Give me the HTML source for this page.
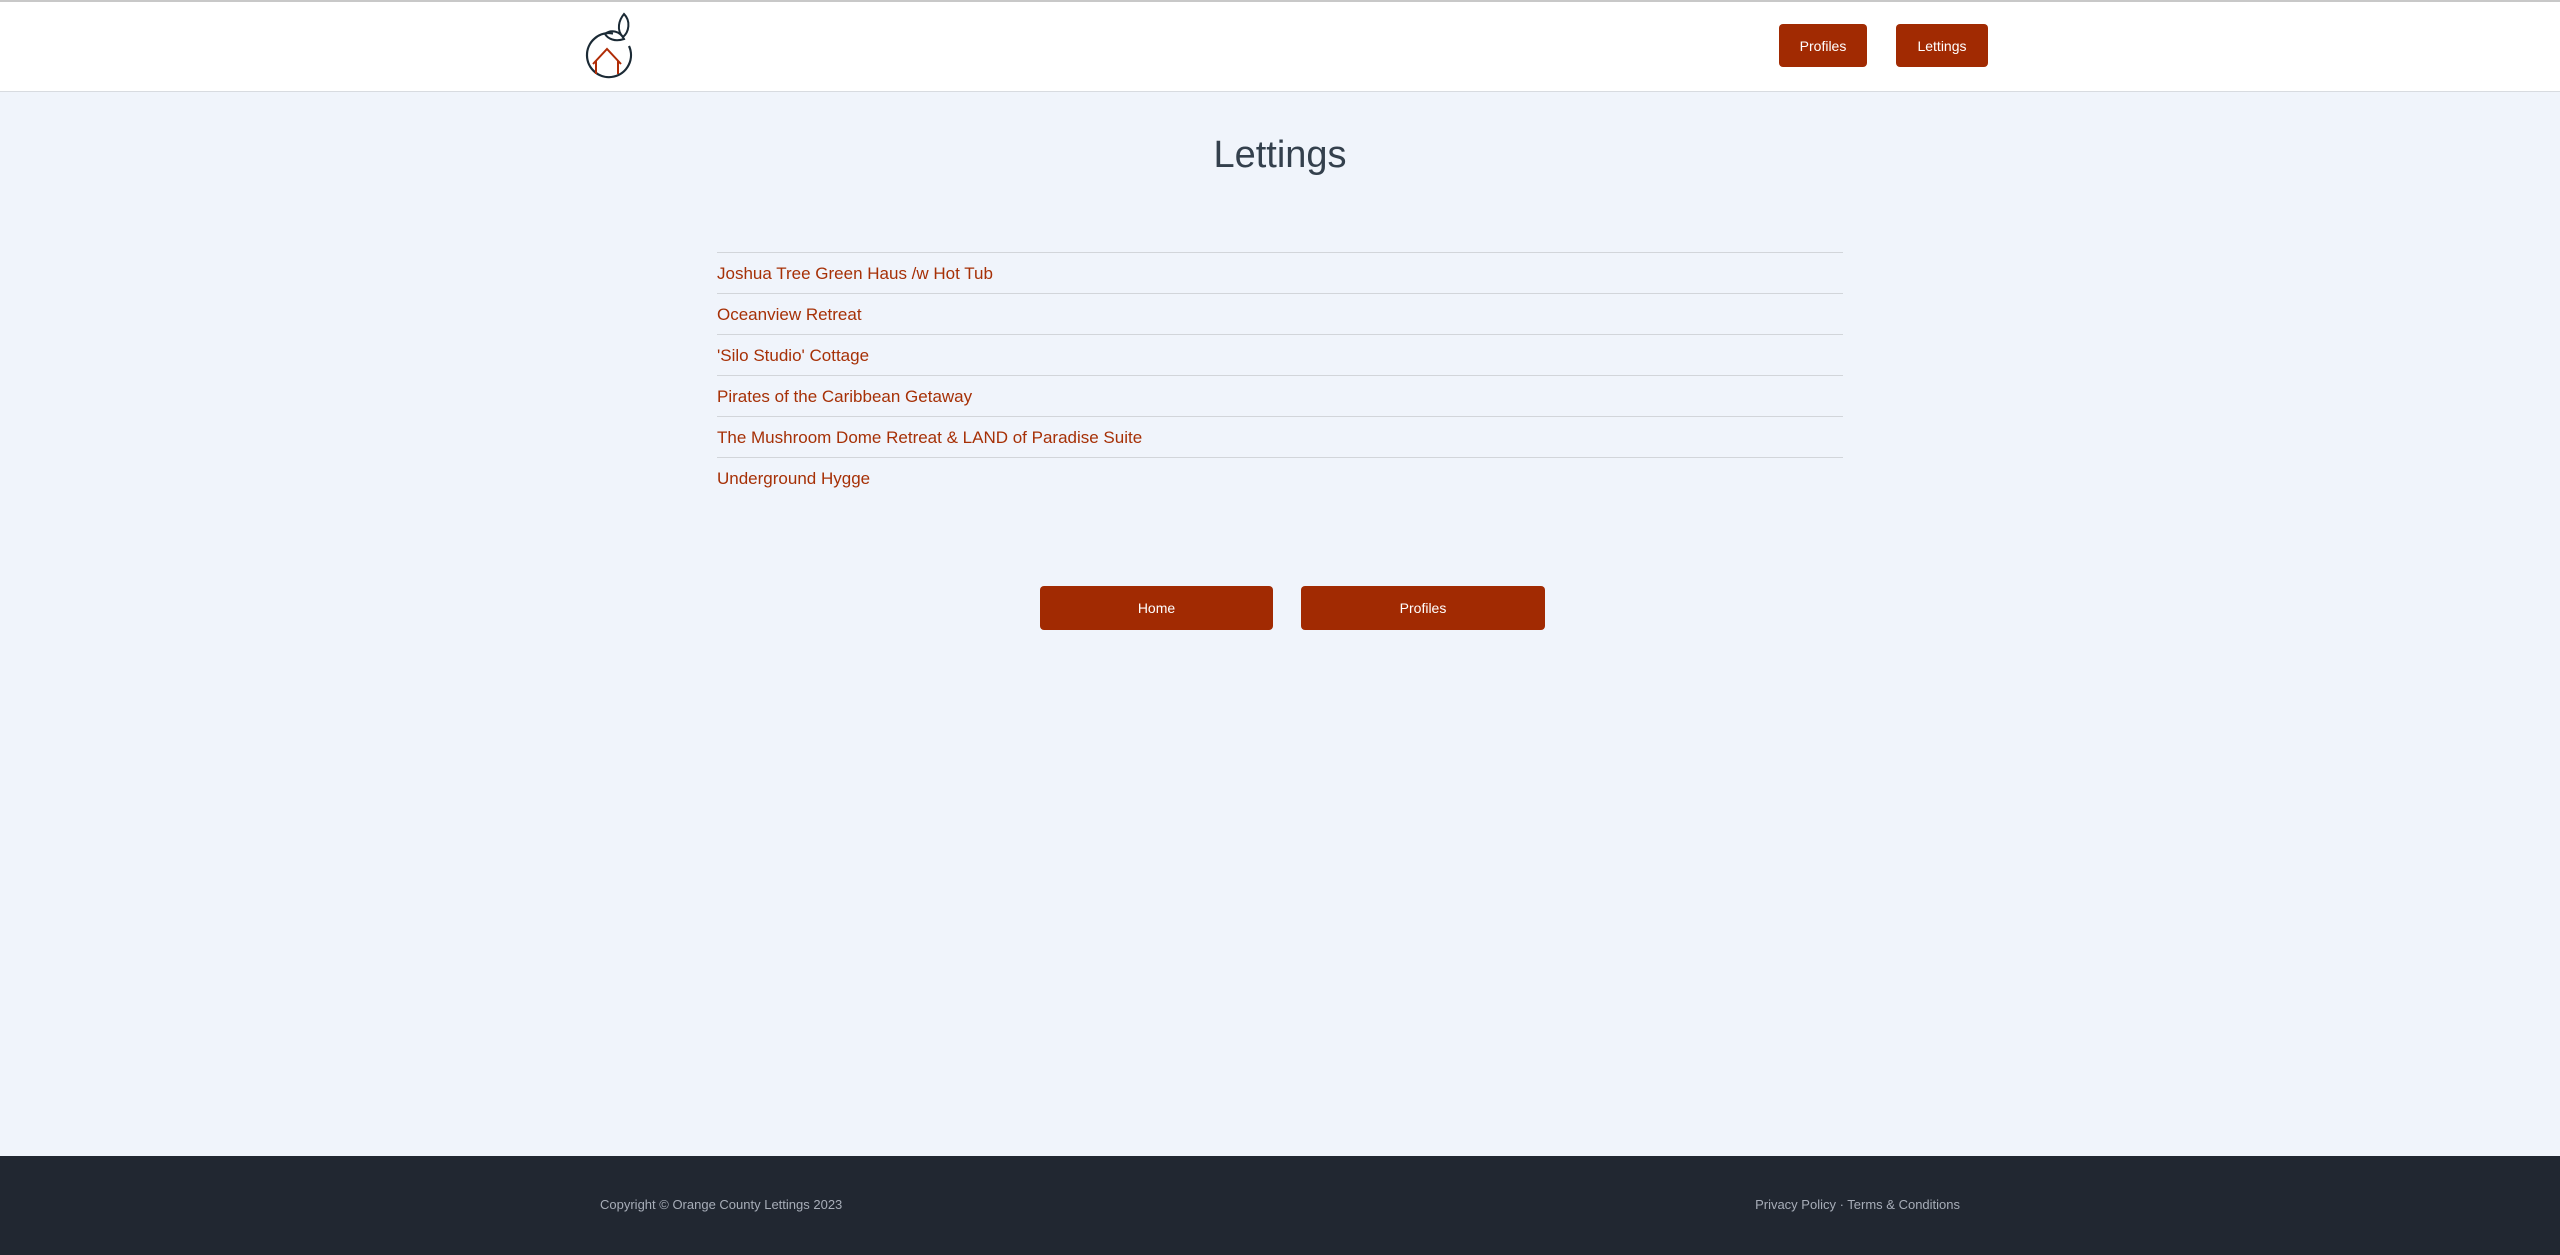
<!DOCTYPE html>
<html><head><meta charset="utf-8"><style>
*{margin:0;padding:0;box-sizing:border-box}
html,body{width:2560px;height:1255px;overflow:hidden;background:#f0f4fb;font-family:"Liberation Sans",sans-serif}
.hdr{position:absolute;left:0;top:0;width:2560px;height:92px;background:#fff;border-top:2px solid #c8c8c8;border-bottom:1px solid #d8dbe0}
.btn{position:absolute;background:#a12a02;color:#fff;border-radius:4px;display:flex;align-items:center;justify-content:center;font-size:14px}
h1{position:absolute;left:0;width:2560px;top:134px;text-align:center;font-weight:normal;font-size:38px;color:#34404d}
.list{position:absolute;left:717px;top:252px;width:1126px}
.list div{height:41px;border-top:1.5px solid #d2d5da;color:#a63006;font-size:17px;line-height:41px}
.ftr{position:absolute;left:0;top:1156px;width:2560px;height:99px;background:#212731;color:#a7adb8;font-size:13px}
</style></head><body>
<div class="hdr">
<svg style="position:absolute;left:580px;top:-2px" width="60" height="90" viewBox="580 0 60 90">
<path d="M613 33.5 A22 22 0 1 0 629 46" fill="none" stroke="#1b2a35" stroke-width="2.2"/>
<path d="M623 37 C616 30 619 20 624 14 C631 21 629 32 623 37Z" fill="none" stroke="#1b2a35" stroke-width="2"/>
<path d="M605 34 C611 29 620 31 624 39 C615 42 608 39 605 34Z" fill="none" stroke="#1b2a35" stroke-width="2"/>
<path d="M593 64 L607 49 L621 64 M596 61 V74 M618 61 V74" fill="none" stroke="#b02c06" stroke-width="2"/>
</svg>
<div class="btn" style="left:1779px;top:22px;width:88px;height:43px">Profiles</div>
<div class="btn" style="left:1896px;top:22px;width:92px;height:43px">Lettings</div>
</div>
<h1>Lettings</h1>
<div class="list">
<div>Joshua Tree Green Haus /w Hot Tub</div>
<div>Oceanview Retreat</div>
<div>'Silo Studio' Cottage</div>
<div>Pirates of the Caribbean Getaway</div>
<div>The Mushroom Dome Retreat &amp; LAND of Paradise Suite</div>
<div>Underground Hygge</div>
</div>
<div class="btn" style="left:1040px;top:586px;width:233px;height:44px">Home</div>
<div class="btn" style="left:1301px;top:586px;width:244px;height:44px">Profiles</div>
<div class="ftr">
<div style="position:absolute;left:600px;top:41px">Copyright © Orange County Lettings 2023</div>
<div style="position:absolute;right:600px;top:41px">Privacy Policy · Terms &amp; Conditions</div>
</div>
</body></html>
